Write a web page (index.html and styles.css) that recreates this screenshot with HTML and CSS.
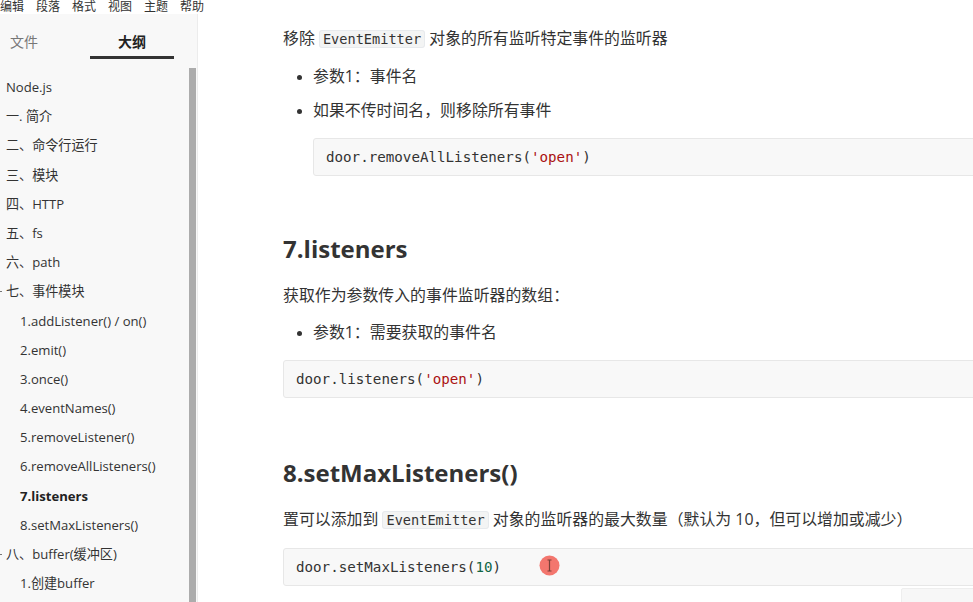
FILE: index.html
```html
<!DOCTYPE html>
<html lang="zh-CN">
<head>
<meta charset="utf-8">
<title>Node.js 笔记</title>
<link rel="stylesheet" href="styles.css">
</head>
<body>
<div class="menubar">
  <span class="menu-item">编辑</span>
  <span class="menu-item">段落</span>
  <span class="menu-item">格式</span>
  <span class="menu-item">视图</span>
  <span class="menu-item">主题</span>
  <span class="menu-item">帮助</span>
</div>
<div class="app">
  <aside class="sidebar">
    <div class="tabs">
      <div class="tab">文件</div>
      <div class="tab active">大纲</div>
    </div>
    <div class="outline-wrap">
      <ul class="outline">
        <li class="lv1">Node.js</li>
        <li class="lv1">一. 简介</li>
        <li class="lv1">二、命令行运行</li>
        <li class="lv1">三、模块</li>
        <li class="lv1">四、HTTP</li>
        <li class="lv1">五、fs</li>
        <li class="lv1">六、path</li>
        <li class="lv1 has-toggle">七、事件模块</li>
        <li class="lv2">1.addListener() / on()</li>
        <li class="lv2">2.emit()</li>
        <li class="lv2">3.once()</li>
        <li class="lv2">4.eventNames()</li>
        <li class="lv2">5.removeListener()</li>
        <li class="lv2">6.removeAllListeners()</li>
        <li class="lv2 current">7.listeners</li>
        <li class="lv2">8.setMaxListeners()</li>
        <li class="lv1 has-toggle">八、buffer(缓冲区)</li>
        <li class="lv2">1.创建buffer</li>
      </ul>
      <div class="scrollbar"><div class="thumb"></div></div>
    </div>
  </aside>
  <main class="editor">
    <div class="content">
      <p class="p-first">移除 <code class="inline">EventEmitter</code> 对象的所有监听特定事件的监听器</p>
      <ul class="list">
        <li>参数1：事件名</li>
        <li>如果不传时间名，则移除所有事件
          <pre class="code"><span>door.removeAllListeners(</span><span class="str">'open'</span><span>)</span></pre>
        </li>
      </ul>
      <h2>7.listeners</h2>
      <p>获取作为参数传入的事件监听器的数组：</p>
      <ul class="list">
        <li>参数1：需要获取的事件名</li>
      </ul>
      <pre class="code"><span>door.listeners(</span><span class="str">'open'</span><span>)</span></pre>
      <h2>8.setMaxListeners()</h2>
      <p>置可以添加到 <code class="inline">EventEmitter</code> 对象的监听器的最大数量（默认为 10，但可以增加或减少）</p>
      <pre class="code code-cursor"><span>door.setMaxListeners(</span><span class="num">10</span><span>)</span><span class="cursor-dot"><svg width="21" height="21" viewBox="0 0 21 21"><circle cx="10.5" cy="10.5" r="10" fill="#f26a62" opacity="0.92"/><path d="M8.5 5h4M8.5 16h4M10.5 5v11" stroke="#7a4038" stroke-width="1.2" fill="none"/></svg></span></pre>
    </div>
    <div class="float-box"></div>
  </main>
</div>
</body>
</html>
```
FILE: styles.css
```css
* { box-sizing: border-box; }
html, body {
  margin: 0;
  padding: 0;
  width: 973px;
  height: 602px;
  overflow: hidden;
  background: #fff;
  font-family: "Open Sans", "Noto Sans CJK SC", sans-serif;
  color: #333;
}
.menubar {
  height: 14px;
  display: flex;
  align-items: flex-end;
  overflow: hidden;
  background: #fff;
  gap: 12px;
}
.menu-item {
  font-size: 12px;
  line-height: 20px;
  color: #333;
  font-family: "Noto Sans CJK SC", sans-serif;
  margin-bottom: -2px;
}
.app {
  display: flex;
  height: 588px;
}
.sidebar {
  width: 198px;
  flex: none;
  background: #f8f8f8;
  border-right: 1px solid #ececec;
  display: flex;
  flex-direction: column;
  overflow: hidden;
}
.tabs {
  height: 46px;
  display: flex;
}
.tab {
  font-size: 14px;
  color: #777;
  line-height: 20px;
  padding-top: 17px;
  font-family: "Noto Sans CJK SC", sans-serif;
}
.tab:first-child {
  width: 90px;
  padding-left: 10px;
}
.tab.active {
  width: 84px;
  text-align: center;
  color: #222;
  font-weight: bold;
  border-bottom: 3px solid #333;
  height: 45px;
}
.outline-wrap {
  flex: 1;
  display: flex;
  min-height: 0;
}
.outline {
  list-style: none;
  margin: 0;
  padding: 13px 0 0 0;
  flex: 1;
  font-size: 13.1px;
}
.outline li {
  height: 29.2px;
  line-height: 29.2px;
  white-space: nowrap;
  color: #333;
  position: relative;
}
.outline .lv1 { padding-left: 6px; }
.outline .lv2 { padding-left: 20px; }
.outline .current { font-weight: bold; color: #222; }
.outline .has-toggle::before {
  content: "";
  position: absolute;
  left: 0;
  top: 14px;
  width: 2px;
  height: 1px;
  background: #777;
}
.scrollbar {
  width: 8px;
  flex: none;
  padding-top: 8px;
}
.thumb {
  width: 7px;
  height: 100%;
  background: #acacac;
}
.editor {
  flex: 1;
  overflow: hidden;
  position: relative;
  background: #fff;
}
.content {
  width: 760px;
  padding-left: 85px;
  padding-top: 11px;
  font-size: 15.9px;
}
p {
  margin: 0;
  line-height: 26px;
}
code.inline {
  font-family: "DejaVu Sans Mono", monospace;
  font-size: 13.6px;
  background: #f3f4f4;
  border: 1px solid #e7eaed;
  border-radius: 3px;
  padding: 0 3px;
  color: #333;
}
.list {
  margin: 11px 0 0 0;
  padding-left: 30px;
  list-style: disc;
}
.list li {
  line-height: 26px;
  margin-bottom: 8px;
}
.list li:last-child { margin-bottom: 0; }
.list li::marker { font-size: 13px; }
.code {
  margin: 15px 0 0 0;
  height: 38px;
  background: #f8f8f8;
  border: 1px solid #e7e7e7;
  border-radius: 3px;
  padding: 0 12px;
  font-family: "DejaVu Sans Mono", monospace;
  font-size: 14.2px;
  line-height: 36px;
  color: #333;
  width: 780px;
  position: relative;
}
.list .code { width: 700px; }
.code .str { color: #a11; }
.code .num { color: #164; }
h2 {
  margin: 55px 0 0 0;
  font-size: 24px;
  line-height: 36px;
  font-weight: bold;
  color: #333;
}
h2 + p { margin-top: 15px; }
.code + h2 { margin-top: 57px; }
.cursor-dot {
  position: absolute;
  left: 255px;
  top: 6px;
  width: 21px;
  height: 21px;
  line-height: 0;
}
.float-box {
  position: absolute;
  left: 703px;
  top: 574px;
  width: 80px;
  height: 30px;
  background: #f7f7f7;
  border: 1px solid #eee;
  border-radius: 2px;
}
```
